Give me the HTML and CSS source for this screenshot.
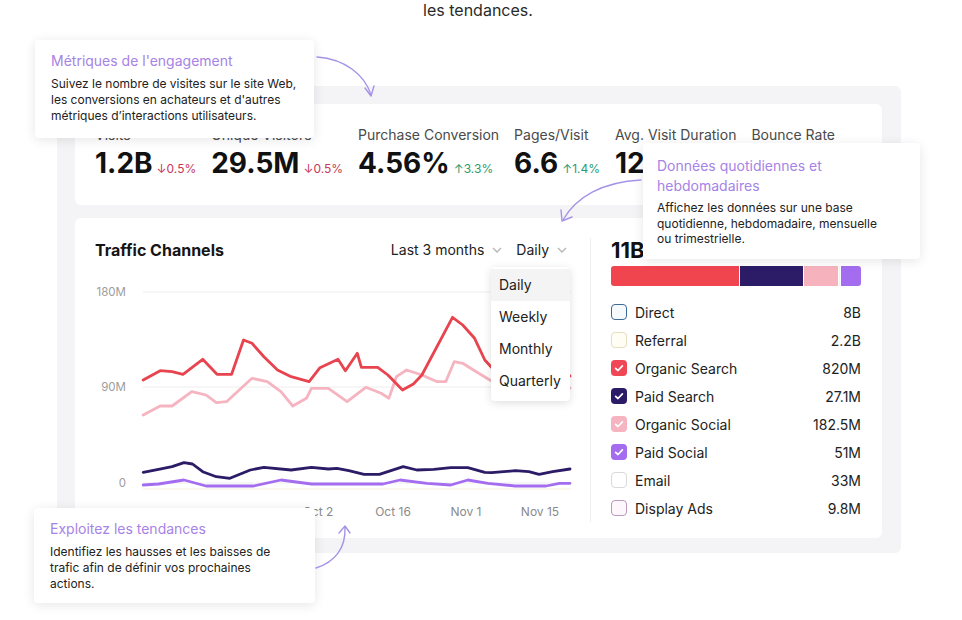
FILE: index.html
```html
<!DOCTYPE html>
<html lang="fr">
<head>
<meta charset="utf-8">
<title>Traffic</title>
<link rel="stylesheet" href="styles.css">
</head>
<body>
<div class="page">
  <p class="intro">les tendances.</p>

  <section class="panel">
    <div class="card metrics">
      <div class="metric">
        <div class="m-label">Visits</div>
        <div class="m-value"><span class="num">1.2B</span><span class="chg down">↓0.5%</span></div>
      </div>
      <div class="metric">
        <div class="m-label">Unique Visitors</div>
        <div class="m-value"><span class="num">29.5M</span><span class="chg down">↓0.5%</span></div>
      </div>
      <div class="metric">
        <div class="m-label">Purchase Conversion</div>
        <div class="m-value"><span class="num">4.56%</span><span class="chg up">↑3.3%</span></div>
      </div>
      <div class="metric">
        <div class="m-label">Pages/Visit</div>
        <div class="m-value"><span class="num">6.6</span><span class="chg up">↑1.4%</span></div>
      </div>
      <div class="metric">
        <div class="m-label">Avg. Visit Duration</div>
        <div class="m-value"><span class="num">12:36</span><span class="chg up">↑2.1%</span></div>
      </div>
      <div class="metric">
        <div class="m-label">Bounce Rate</div>
        <div class="m-value"><span class="num">37%</span><span class="chg down">↓0.8%</span></div>
      </div>
    </div>

    <div class="card traffic">
      <div class="chart-col">
        <div class="chart-head">
          <h2 class="chart-title">Traffic Channels</h2>
          <div class="controls">
            <div class="select">Last 3 months
              <svg class="chev" width="10" height="6" viewBox="0 0 10 6"><polyline points="1,1 5,5 9,1" fill="none" stroke="#b5b5b5" stroke-width="1.3"/></svg>
            </div>
            <div class="select open">Daily
              <svg class="chev" width="10" height="6" viewBox="0 0 10 6"><polyline points="1,1 5,5 9,1" fill="none" stroke="#b5b5b5" stroke-width="1.3"/></svg>
              <ul class="menu">
                <li class="active">Daily</li>
                <li>Weekly</li>
                <li>Monthly</li>
                <li>Quarterly</li>
              </ul>
            </div>
          </div>
        </div>
        <svg class="chart" width="476" height="242" viewBox="95 280 476 242">
          <g stroke="#ededed" stroke-width="1">
            <line x1="143" y1="292" x2="571" y2="292"/>
            <line x1="143" y1="387" x2="571" y2="387"/>
            <line x1="143" y1="483" x2="571" y2="483"/>
          </g>
          <line x1="143" y1="489" x2="571" y2="489" stroke="#f6f2de" stroke-width="1"/>
          <g class="axis-y" text-anchor="end">
            <text x="126" y="296">180M</text>
            <text x="126" y="391">90M</text>
            <text x="126" y="487">0</text>
          </g>
          <g class="axis-x" text-anchor="middle">
            <text x="318" y="516">Oct 2</text>
            <text x="393" y="516">Oct 16</text>
            <text x="466" y="516">Nov 1</text>
            <text x="540" y="516">Nov 15</text>
          </g>
          <g fill="none" stroke-width="2.8" stroke-linejoin="round" stroke-linecap="round">
            <polyline stroke="#f5b4bf" points="143.2,415 160.2,406 172.1,406 191.8,391.7 206.1,395 216.3,402.7 226.5,401.7 252,378.3 267.3,381.7 280.9,391.7 292.8,406 306.4,398.3 311.4,388.3 328.4,388.3 347.1,401.7 365.8,387.3 381.1,393.3 388.9,398.3 396.4,376.7 406.6,370 421.9,375 437.2,381.7 445.7,381.7 454.2,361.7 462.7,363.3 474.6,370.7 489.8,380 500,386 520,384 545,390 570,388"/>
            <polyline stroke="#e8444f" points="143.2,380 160.2,370.7 172.1,371.7 183,374.3 202.7,359.3 217,374.3 231.6,374.3 243.5,340 252,343.3 263.9,356.7 277.5,370 291.1,376.7 309.1,381.7 320,367.7 338,359.3 345.4,370.7 357.3,353.3 361.4,367.3 377.7,367.3 387.9,375 402.5,390 413.4,384 421.9,375 452.5,317.3 462.7,325 474.6,338.3 484.8,360 493.3,369.3 505,376 520,372 540,378 570,376"/>
            <polyline stroke="#2c1b66" points="143.2,472.3 158.5,469.3 172.1,466.7 184,462.7 192.5,464 202.7,471.7 216.3,476.7 229.9,478.3 250.3,470 263.9,467.3 291.1,470 311.4,467.3 328.4,469 336.9,468.3 348.8,470.7 364.1,474.3 379.4,474.3 403.2,466.7 416.8,470 433.8,469.3 450.8,467.7 467.8,467.7 484.8,472.3 491.5,472.7 515.3,470.7 528.9,471.7 539.1,474.3 552.7,471.7 570,469"/>
            <polyline stroke="#a46df0" points="143.2,485 158.5,484 184,480 206.1,486 229.9,486 253.7,486 281,480 311.4,484 383,484 400,480 427,483.3 450.8,485 467.8,480 488,483.3 515.3,486 546,486 559.5,483.3 570,483.3"/>
          </g>
        </svg>
      </div>

      <div class="legend-col">
        <div class="total">11B</div>
        <div class="stack">
          <span class="seg" style="width:128px;background:#f0444f"></span>
          <span class="seg" style="width:63px;background:#2c1b66"></span>
          <span class="seg" style="width:34px;background:#f6b3bd"></span>
          <span class="seg" style="width:1px;background:#f3f3f3"></span>
          <span class="seg" style="width:20px;background:#a46df0"></span>
        </div>
        <ul class="legend">
          <li><span class="box b-direct"></span><span class="l-name">Direct</span><span class="l-val">8B</span></li>
          <li><span class="box b-referral"></span><span class="l-name">Referral</span><span class="l-val">2.2B</span></li>
          <li><span class="box checked b-osearch"><svg width="16" height="16" viewBox="0 0 16 16"><polyline points="4.6,8.3 7,10.5 11.4,5.8" fill="none" stroke="#fff" stroke-width="1.7" stroke-linecap="round" stroke-linejoin="round"/></svg></span><span class="l-name">Organic Search</span><span class="l-val">820M</span></li>
          <li><span class="box checked b-psearch"><svg width="16" height="16" viewBox="0 0 16 16"><polyline points="4.6,8.3 7,10.5 11.4,5.8" fill="none" stroke="#fff" stroke-width="1.7" stroke-linecap="round" stroke-linejoin="round"/></svg></span><span class="l-name">Paid Search</span><span class="l-val">27.1M</span></li>
          <li><span class="box checked b-osocial"><svg width="16" height="16" viewBox="0 0 16 16"><polyline points="4.6,8.3 7,10.5 11.4,5.8" fill="none" stroke="#fff" stroke-width="1.7" stroke-linecap="round" stroke-linejoin="round"/></svg></span><span class="l-name">Organic Social</span><span class="l-val">182.5M</span></li>
          <li><span class="box checked b-psocial"><svg width="16" height="16" viewBox="0 0 16 16"><polyline points="4.6,8.3 7,10.5 11.4,5.8" fill="none" stroke="#fff" stroke-width="1.7" stroke-linecap="round" stroke-linejoin="round"/></svg></span><span class="l-name">Paid Social</span><span class="l-val">51M</span></li>
          <li><span class="box b-email"></span><span class="l-name">Email</span><span class="l-val">33M</span></li>
          <li><span class="box b-display"></span><span class="l-name">Display Ads</span><span class="l-val">9.8M</span></li>
        </ul>
      </div>
    </div>
  </section>

  <div class="callout c1">
    <div class="c-title">Métriques de l'engagement</div>
    <div class="c-body">Suivez le nombre de visites sur le site Web,<br>les conversions en achateurs et d'autres<br>métriques d’interactions utilisateurs.</div>
  </div>

  <div class="callout c2">
    <div class="c-title">Données quotidiennes et<br>hebdomadaires</div>
    <div class="c-body">Affichez les données sur une base<br>quotidienne, hebdomadaire, mensuelle<br>ou trimestrielle.</div>
  </div>

  <div class="callout c3">
    <div class="c-title">Exploitez les tendances</div>
    <div class="c-body">Identifiez les hausses et les baisses de<br>trafic afin de définir vos prochaines<br>actions.</div>
  </div>

  <svg class="arrows" width="962" height="620" viewBox="0 0 962 620">
    <g fill="none" stroke="#a693e8" stroke-width="1.4" stroke-linecap="round" stroke-linejoin="round">
      <path d="M317 57 C345 59 365 75 371 95"/>
      <path d="M365 88 L371 96 L374 86"/>
      <path d="M641 180 C602 182 576 197 563 220"/>
      <path d="M561 210 L562 221 L572 217"/>
      <path d="M316 568 C335 562 346 548 345 527"/>
      <path d="M339 533 L345 526 L350 533"/>
    </g>
  </svg>
</div>
</body>
</html>
```

FILE: styles.css
```css
html, body {
  margin: 0;
  padding: 0;
  background: #ffffff;
}

body {
  font-family: Inter, "Noto Sans", "Liberation Sans", sans-serif;
  color: #1f1f1f;
}

.page {
  position: relative;
  width: 962px;
  height: 620px;
  overflow: hidden;
}

.intro {
  margin: 0;
  padding-right: 6px;
  text-align: center;
  font-size: 16px;
  line-height: 20px;
  color: #2a2a2a;
}

.panel {
  margin: 66px 0 0 57px;
  width: 844px;
  box-sizing: border-box;
  padding: 18px 19px 15px 18px;
  background: #f4f4f6;
  border-radius: 6px;
  display: flex;
  flex-direction: column;
  gap: 13px;
}

.card {
  background: #ffffff;
  border-radius: 6px;
}

/* Metrics */
.metrics {
  height: 101px;
  box-sizing: border-box;
  padding: 21px 20px 0;
  display: flex;
  gap: 15px;
}

.m-label {
  font-size: 14px;
  line-height: 20px;
  color: #4a4a4a;
  white-space: nowrap;
}

.m-value {
  display: flex;
  align-items: baseline;
  gap: 4px;
  margin-top: 1px;
  line-height: 34px;
  white-space: nowrap;
}

.num {
  font-size: 28px;
  font-weight: 700;
  color: #111111;
}

.chg {
  font-size: 12px;
}

.down { color: #c9385a; }
.up { color: #2a9d6e; }

/* Traffic card */
.traffic {
  height: 320px;
  box-sizing: border-box;
  padding: 20px 22px 16px 20px;
  display: flex;
}

.chart-col {
  width: 475px;
  padding-right: 20px;
  border-right: 1px solid #eeeeee;
}

.chart-head {
  display: flex;
  justify-content: space-between;
  align-items: center;
  height: 24px;
}

.chart-title {
  margin: 0;
  font-size: 16px;
  font-weight: 700;
  color: #151515;
}

.controls {
  display: flex;
  gap: 14px;
  padding-right: 3px;
}

.select {
  position: relative;
  display: flex;
  align-items: center;
  gap: 8px;
  font-size: 14px;
  line-height: 24px;
  color: #222222;
}

.chev {
  display: block;
}

.menu {
  position: absolute;
  right: -3px;
  top: calc(100% + 5px);
  width: 79px;
  box-sizing: border-box;
  margin: 0;
  padding: 2px 0 4px;
  list-style: none;
  background: #ffffff;
  border-radius: 4px;
  box-shadow: 0 2px 9px rgba(0, 0, 0, 0.13);
  z-index: 2;
}

.menu li {
  height: 32px;
  line-height: 32px;
  padding: 0 8px;
  font-size: 14px;
  color: #222222;
}

.menu li.active {
  background: #f4f4f5;
}

.chart {
  display: block;
  margin-top: 18px;
  overflow: visible;
}

.axis-y text {
  font-size: 11.5px;
  fill: #9c9c9c;
}

.axis-x text {
  font-size: 12px;
  fill: #8a8a8a;
}

/* Legend */
.legend-col {
  flex: 1;
  padding-left: 20px;
}

.total {
  font-size: 22px;
  font-weight: 700;
  line-height: 24px;
  color: #111111;
}

.stack {
  margin-top: 4px;
  height: 20px;
  display: flex;
  gap: 1px;
  border-radius: 3px;
  overflow: hidden;
}

.seg {
  display: block;
  height: 100%;
}

.legend {
  margin: 12px 0 0;
  padding: 0;
  list-style: none;
}

.legend li {
  height: 28px;
  display: flex;
  align-items: center;
  font-size: 14px;
  color: #222222;
}

.box {
  width: 16px;
  height: 16px;
  box-sizing: border-box;
  border-radius: 4px;
  margin-right: 8px;
  flex: none;
}

.box svg {
  display: block;
}

.l-name {
  flex: 1;
}

.l-val {
  text-align: right;
}

.b-direct { border: 1.5px solid #3d6a98; background: #f7fafd; }
.b-referral { border: 1.5px solid #e6dfbd; background: #fffdf4; }
.b-osearch { background: #ef4756; }
.b-psearch { background: #2c1b66; }
.b-osocial { background: #f6b4c0; }
.b-psocial { background: #a46df0; }
.b-email { border: 1.5px solid #d9d9d9; background: #ffffff; }
.b-display { border: 1.5px solid #bb9bbb; background: #fdf7fd; }

/* Callouts */
.callout {
  position: absolute;
  background: #ffffff;
  border-radius: 4px;
  box-shadow: 0 2px 12px rgba(0, 0, 0, 0.1);
  box-sizing: border-box;
  padding: 11px 16px 14px;
  z-index: 3;
}

.c1 { left: 35px; top: 40px; width: 279px; }
.c2 { left: 643px; top: 143px; width: 277px; padding: 13px 14px 12px; }
.c3 { left: 34px; top: 508px; width: 281px; padding-bottom: 11px; }

.c-title {
  font-size: 14px;
  line-height: 20px;
  color: #a683e6;
  margin-bottom: 5px;
}

.c-body {
  font-size: 12px;
  line-height: 16px;
  color: #222222;
}

.c2 .c-title { margin-bottom: 4px; }
.c2 .c-body { line-height: 15.5px; }

.arrows {
  position: absolute;
  left: 0;
  top: 0;
  pointer-events: none;
  z-index: 4;
}
```
